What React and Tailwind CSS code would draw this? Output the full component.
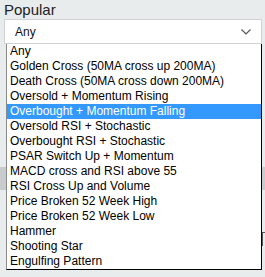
import React from "react";

const options = [
  "Any",
  "Golden Cross (50MA cross up 200MA)",
  "Death Cross (50MA cross down 200MA)",
  "Oversold + Momentum Rising",
  "Overbought + Momentum Falling",
  "Oversold RSI + Stochastic",
  "Overbought RSI + Stochastic",
  "PSAR Switch Up + Momentum",
  "MACD cross and RSI above 55",
  "RSI Cross Up and Volume",
  "Price Broken 52 Week High",
  "Price Broken 52 Week Low",
  "Hammer",
  "Shooting Star",
  "Engulfing Pattern",
];

export default function App() {
  const selected = 4;

  return (
    <div
      className="w-[265px] h-[277px] bg-[#e9eced] overflow-hidden"
      style={{ fontFamily: '"Liberation Sans", Arial, sans-serif' }}
    >
      <div className="pl-[4px] pt-[1px]">
        <div className="text-[15px] leading-[18px] text-[#222]">Popular</div>

        {/* Select with open list */}
        <div className="relative mt-0 w-[258px]">
          <div className="h-[25px] flex items-center justify-between bg-white border border-[#cfd3d5] pl-[10px] pr-[10px] text-[12px] text-[#111]">
            <span>Any</span>
            <svg width="10" height="6" viewBox="0 0 10 6" fill="none">
              <path d="M0.5 0.5L5 5L9.5 0.5" stroke="#555" strokeWidth="1.2" />
            </svg>
          </div>

          <ul className="absolute left-[2px] top-[25px] w-[256px] z-10 bg-white border-l border-l-[#8a8a8a] border-r border-r-black border-b border-b-black">
            {options.map((o, i) => (
              <li
                key={o}
                className={
                  i === selected
                    ? "h-[15px] leading-[15px] pl-[3px] text-[12px] bg-[#3399ff] text-white whitespace-nowrap"
                    : "h-[15px] leading-[15px] pl-[3px] text-[12px] text-black whitespace-nowrap"
                }
              >
                {o}
              </li>
            ))}
          </ul>
        </div>

        {/* Content behind the open list */}
        <div className="mt-[123px] -ml-[4px] h-[23px] w-[265px] bg-[#c9cccd]" />
        <div className="mt-[42px] ml-[258px] h-[14px] w-[20px] border-l border-t border-[#555]" />
      </div>
    </div>
  );
}
